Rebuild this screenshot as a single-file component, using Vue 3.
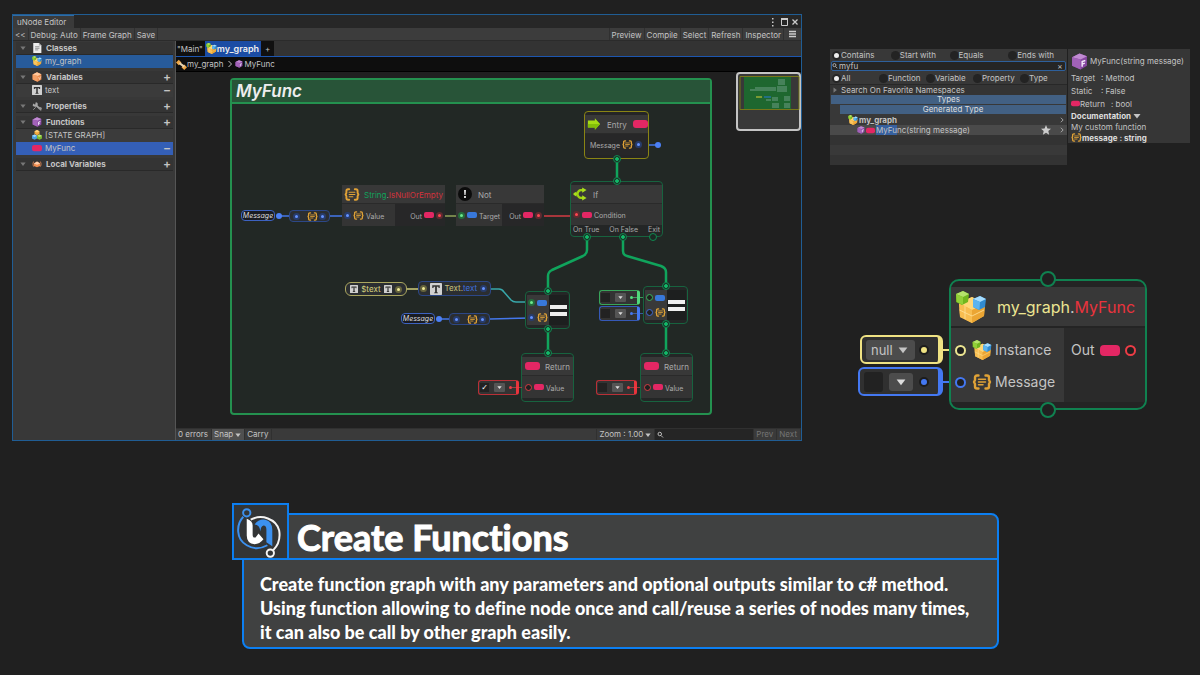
<script setup>
import { ref } from 'vue'

const view = { x: 176, y: 72 }
const at = (x, y, w, h) => ({
  left: x - view.x + 'px',
  top: y - view.y + 'px',
  width: w + 'px',
  height: h + 'px'
})

const groups = [
  { title: 'Classes', icon: 'doc', add: false, rows: [{ name: 'my_graph', icon: 'graph', active: 'a' }] },
  { title: 'Variables', icon: 'ocube', add: true, rows: [{ name: 'text', icon: 'tee', remove: true }] },
  { title: 'Properties', icon: 'wrench', add: true, rows: [] },
  {
    title: 'Functions', icon: 'pcube', add: true,
    rows: [
      { name: '[STATE GRAPH]', icon: 'state' },
      { name: 'MyFunc', icon: 'pill', active: 'b', remove: true }
    ]
  },
  { title: 'Local Variables', icon: 'local', add: true, rows: [] }
]

const query = ref('myfu')
const match = ref('Contains')
const kind = ref('All')
const matches = ['Contains', 'Start with', 'Equals', 'Ends with']
const kinds = ['All', 'Function', 'Variable', 'Property', 'Type']

const params = [
  { x: 241, y: 210, nx: 289 },
  { x: 401, y: 313, nx: 449 }
]
const compares = [
  { x: 525, y: 291, linked: true },
  { x: 643, y: 286, linked: false }
]
const returns = [{ x: 521 }, { x: 640 }]
const defaults = [
  { x: 478, y: 380, tone: 'red', on: true, label: 'First return value' },
  { x: 596, y: 380, tone: 'red', on: false, label: 'Second return value' },
  { x: 599, y: 290, tone: 'green', on: false, label: 'Left operand' },
  { x: 599, y: 306, tone: 'blue', on: false, label: 'Right operand' }
]
const flowPorts = [
  [617, 159], [617, 181], [587, 237], [623, 237], [548, 291], [548, 329],
  [548, 353], [666, 286], [666, 324], [666, 353]
]
</script>

<template>
  <main class="page">
    <svg class="defs" aria-hidden="true">
      <symbol id="graph" viewBox="0 0 32 32">
        <path d="M4 12 17 6l13 7-1 12-12 7-12-6z" fill="#f4b545" />
        <path d="M4 12 17 6l13 7-13 6z" fill="#ffd878" />
        <path d="M17 19v13L5 26 4 12z" fill="#f8bd50" />
        <path d="M17 19 30 13l-1 12-12 7z" fill="#eba533" />
        <path d="M10 15v13M4.500 19 17 25l12-6" fill="none" stroke="#ffe29a" stroke-width=".8" />
        <path d="M1 3 8 0l6 3-1 8-6 3-6-3z" fill="#71b61e" />
        <path d="M1 3 8 0l6 3-6 3z" fill="#b5e36b" /><path d="M8 6v8l-6-3-1-8z" fill="#92d038" />
        <path d="m18 8 7-3 6 3-1 8-6 3-6-3z" fill="#318bd0" />
        <path d="m18 8 7-3 6 3-6 3z" fill="#a5ddff" /><path d="M25 11l-.500 8-6.500-3V8z" fill="#5bb4ef" />
      </symbol>
      <symbol id="pcube" viewBox="0 0 16 16">
        <path d="M1 4 8 .5 15 3v9l-6 3.500L1 12z" fill="#8747a0" />
        <path d="M1 4 8 .5 15 3 9 6z" fill="#c18bd2" /><path d="M1 4l8 2v9.500L1 12z" fill="#a262b8" />
        <path d="M10.500 13V8l3-1M10.500 10.500l2.500-1" stroke="#f4e8fa" stroke-width="1.400" fill="none" />
      </symbol>
      <symbol id="ocube" viewBox="0 0 16 16">
        <path d="M1 4 8 .5l7 3V12l-6 3.500L1 12z" fill="#e88b4f" />
        <path d="M1 4 8 .5l7 3L9 6.500z" fill="#ffc79c" /><path d="M1 4l8 2.500v9L1 12z" fill="#f5a066" />
        <path d="m10.500 8 1.500 4 2-5" stroke="#ffe0c8" fill="none" />
      </symbol>
      <symbol id="local" viewBox="0 0 16 16">
        <path d="M3 4Q0 8 3 12M13 4q3 4 0 8" stroke="#a66b49" stroke-width="2" fill="none" />
        <path d="m3 7 5-3 5 3v4l-5 2-5-2z" fill="#f08c50" /><path d="m3 7 5-3 5 3-5 2z" fill="#ffd0ad" />
      </symbol>
      <symbol id="doc" viewBox="0 0 16 16">
        <path d="M2 0h9l4 4v12H2z" fill="#ececec" /><path d="M11 0v4h4z" fill="#aaa" />
        <path d="M5 6h7M5 8.500h7M5 11h5" stroke="#777" stroke-width="1.200" />
      </symbol>
      <symbol id="tee" viewBox="0 0 16 16">
        <rect width="16" height="16" rx="1" fill="#d0d0d0" />
        <path d="M3 3h10v3.500h-1.500L11 5H9.200v7l1.300 1v.800h-5V13l1.300-1V5H5l-.500 1.500H3z" fill="#333" />
      </symbol>
      <symbol id="wrench" viewBox="0 0 16 16">
        <path d="M2 4 5 6 6 2Q10 2 9 7l5 5-2 2-5-5Q3 10 1 7z" fill="#a8a8a8" />
        <path d="m2 14 4-4M11 10l4 1-1 4z" stroke="#999" stroke-width="1.500" fill="#999" />
      </symbol>
      <symbol id="state" viewBox="0 0 16 16">
        <path d="m8 0 4 2v4.500L8 8.500l-4-2V2z" fill="#f2a93d" /><path d="m8 0 4 2-4 2-4-2z" fill="#ffd47c" />
        <path d="m4 7 4 2v4.500l-4 2-4-2V9z" fill="#4a9fe0" /><path d="m4 7 4 2-4 2-4-2z" fill="#9ad6ff" />
        <path d="m12 7 4 2v4.500l-4 2-4-2V9z" fill="#79b930" /><path d="m12 7 4 2-4 2-4-2z" fill="#bce675" />
      </symbol>
      <symbol id="pill" viewBox="0 0 16 16"><rect y="3" width="16" height="10" rx="3.500" fill="#e32764" /></symbol>
      <symbol id="brackets" viewBox="0 0 20 16">
        <path d="M6.500 1.500H5Q3 1.500 3 3.500V6L2 8l1 2v2.500q0 2 2 2h1.500M13.500 1.500H15q2 0 2 2V6l1 2-1 2v2.500q0 2-2 2h-1.500" fill="none" stroke="#e0a236" stroke-width="2.400" stroke-linecap="round" stroke-linejoin="round" />
        <path d="M6.500 5.200h7M6.500 8h7M6.500 10.800h4.500" stroke="#e0a236" stroke-width="1.500" stroke-linecap="round" />
      </symbol>
      <symbol id="arrow" viewBox="0 0 16 16">
        <path d="M1 4h8V1.500L15 8l-6 6.500V12H1z" fill="#a5dc14" /><path d="M1 8h14l-6 6.500V12H1z" fill="#83bf08" />
      </symbol>
      <symbol id="branch" viewBox="0 0 16 16">
        <path d="M1 8h4Q6 3.500 9 3.500h2.500M5 8q1 4.500 4 4.500h2.500" fill="none" stroke="#9cd312" stroke-width="2.600" />
        <path d="m10.500.500 5 3-5 3zM10.500 9.500l5 3-5 3zM0 8l4-3v6z" fill="#a9df1c" />
      </symbol>
      <symbol id="bang" viewBox="0 0 16 16">
        <circle cx="8" cy="8" r="8" fill="#0b0b0b" /><path d="M7 3.500h2l-.400 5.500H7.400z" fill="#fff" /><circle cx="8" cy="11.500" r="1.200" fill="#fff" />
      </symbol>
      <symbol id="lens" viewBox="0 0 16 16">
        <circle cx="5.500" cy="6" r="3.500" fill="none" stroke="#bbb" stroke-width="2" /><path d="m8 9 4 4" stroke="#bbb" stroke-width="2" />
      </symbol>
      <symbol id="star" viewBox="0 0 16 16"><path d="m8 0 2.300 5.400 5.700.500-4.300 3.800L13 15.500 8 12.400l-5 3.100 1.300-5.800L0 5.900l5.700-.500z" fill="#ccc" /></symbol>
      <symbol id="down" viewBox="0 0 16 16"><path d="M1 4h14L8 13z" fill="currentColor" /></symbol>
      <symbol id="next" viewBox="0 0 16 16"><path d="m5 2 6 6-6 6" fill="none" stroke="currentColor" stroke-width="2" /></symbol>
    </svg>

    <div class="top">
      <section class="editor" aria-label="uNode Editor">
        <header class="titlebar">
          <span class="wtab">uNode Editor</span>
          <svg class="winbtns" viewBox="0 0 30 12" aria-hidden="true">
            <path d="M3 2h1.500v1.500H3zM3 5.500h1.500V7H3zM3 9h1.500v1.500H3z" fill="#ccc" />
            <path d="M12.500 2.500h6v7h-6z" fill="none" stroke="#ccc" /><path d="M12 2h7v2h-7z" fill="#ccc" />
            <path d="m23.500 3.500 5 5m0-5-5 5" stroke="#ccc" stroke-width="1.300" />
          </svg>
        </header>
        <nav class="toolbar">
          <button>&lt;&lt;</button><button>Debug: Auto</button><button>Frame Graph</button><button>Save</button>
          <span class="fill"></span>
          <button>Preview</button><button>Compile</button><button>Select</button><button>Refresh</button><button>Inspector</button>
          <button class="menu" aria-label="Menu"><svg class="i8" viewBox="0 0 8 8"><path d="M1 1.500h7M1 4h7M1 6.500h7" stroke="#ccc" stroke-width="1.500" /></svg></button>
        </nav>
        <div class="workspace">
          <aside class="sidebar">
            <section v-for="g in groups" :key="g.title">
              <h2 class="ghead">
                <svg class="tri"><use href="#down" /></svg>
                <svg class="i10"><use :href="'#' + g.icon" /></svg>
                <span>{{ g.title }}</span>
                <button v-if="g.add" class="sign" :aria-label="'Add to ' + g.title">+</button>
              </h2>
              <div v-for="r in g.rows" :key="r.name" class="grow" :class="r.active">
                <svg class="i10"><use :href="'#' + r.icon" /></svg>
                <span>{{ r.name }}</span>
                <button v-if="r.remove" class="sign" :aria-label="'Remove ' + r.name">−</button>
              </div>
            </section>
          </aside>
          <div class="graph">
            <div class="tabs">
              <button>"Main"</button>
              <button class="on"><svg class="i11"><use href="#graph" /></svg>my_graph</button>
              <button class="plus">+</button>
            </div>
            <div class="crumbs">
              <svg class="i11" viewBox="0 0 16 16" aria-hidden="true"><path d="m4 1 4 4-4 4-4-4zM12 8l4 4-4 4-4-4z" fill="#eda647" /><path d="m5 6 7 5" stroke="#e7d3b0" stroke-width="3" /></svg>
              <a href="#">my_graph</a><svg class="i8"><use href="#next" /></svg>
              <svg class="i8"><use href="#pcube" /></svg><a href="#">MyFunc</a>
            </div>
            <div class="canvas">
              <section class="frame" :style="at(230, 78, 482, 337)"><h1>MyFunc</h1></section>

              <svg class="wires" aria-hidden="true">
                <g transform="translate(-176 -72)" fill="none">
                  <g stroke="#10a45c" stroke-width="2.500" stroke-linejoin="round">
                    <path d="M617 159v22M587 237v13q0 4-4 6l-31 14q-4 2-4 6v15M623 237v14q0 4 4 5l34 10q5 2 5 6v14M548 329v24M666 324v29" />
                  </g>
                  <g stroke="#4477ea" stroke-width="1.500">
                    <path d="M640 145h18M279 216h16M329 216h18M439 319h16M490 319l40-1" />
                    <path d="M403 289h16" stroke="#d0cd7a" /><path d="M490 289h9q3 0 5 3l7 8q2 2 5 2h14" stroke="#38a7aa" />
                    <path d="M445 216h12" stroke="#91a258" /><path d="M544 216h26" stroke="#d43b43" />
                  </g>
                </g>
              </svg>

              <article class="node entry" :style="at(584, 111, 65, 48)">
                <header><svg class="i14"><use href="#arrow" /></svg><span>Entry</span><i class="pill lg"></i></header>
                <div class="prow end"><span>Message</span><svg class="br"><use href="#brackets" /></svg><i class="port blue"></i></div>
              </article>
              <article class="node plain" :style="at(342, 185, 103, 41)">
                <header class="snug"><svg class="i14w"><use href="#brackets" /></svg><span><b class="g">String</b>.<b class="r">IsNullOrEmpty</b></span></header>
                <div class="cells"><div class="prow"><i class="port blue"></i><svg class="br"><use href="#brackets" /></svg><span>Value</span></div>
                  <div class="prow dark end"><span>Out</span><i class="pill"></i><i class="port red"></i></div></div>
              </article>
              <article class="node plain" :style="at(456, 185, 88, 41)">
                <header><svg class="i14"><use href="#bang" /></svg><span>Not</span></header>
                <div class="cells"><div class="prow"><i class="port green"></i><i class="pill bl"></i><span>Target</span></div>
                  <div class="prow dark end"><span>Out</span><i class="pill"></i><i class="port red"></i></div></div>
              </article>
              <article class="node flow" :style="at(570, 181, 93, 56)">
                <header><svg class="i14"><use href="#branch" /></svg><span>If</span></header>
                <div class="prow tall"><i class="port red"></i><i class="pill"></i><span>Condition</span></div>
                <footer><span>On True</span><span>On False</span><span>Exit</span></footer>
              </article>

              <template v-for="p in params" :key="p.x">
                <div class="param" :style="at(p.x, p.y, 34, 11)">Message</div>
                <div class="chip blue" :style="at(p.nx, p.y, 41, 12)"><i class="port blue"></i><svg class="br"><use href="#brackets" /></svg><i class="port blue"></i></div>
              </template>
              <div class="chip gold" :style="at(345, 282, 62, 14)"><svg class="i8"><use href="#tee" /></svg><span>$text</span><svg class="i8"><use href="#tee" /></svg><i class="port yellow"></i></div>
              <div class="chip blue text" :style="at(418, 281, 73, 15)"><i class="port yellow"></i><svg class="i12"><use href="#tee" /></svg><span>Text.<b>text</b></span><i class="port blue"></i></div>

              <article v-for="c in compares" :key="c.x" class="node flow equals" :style="at(c.x, c.y, 45, 38)">
                <div class="ins">
                  <div><i class="port green" :class="{ open: !c.linked }"></i><i class="pill bl"></i></div>
                  <div><i class="port blue" :class="{ open: !c.linked }"></i><svg class="br"><use href="#brackets" /></svg></div>
                </div>
                <div class="bars"></div>
              </article>
              <article v-for="r in returns" :key="r.x" class="node flow ret" :style="at(r.x, 353, 53, 49)">
                <header><i class="pill lg"></i><span>Return</span></header>
                <div class="prow"><i class="port red open"></i><i class="pill"></i><span>Value</span></div>
              </article>
              <div v-for="d in defaults" :key="d.label" class="default" :class="d.tone" :style="at(d.x, d.y, 41, 15)">
                <input type="checkbox" :checked="d.on" :aria-label="d.label">
                <button class="dd" :aria-label="d.label + ' source'"><svg><use href="#down" /></svg></button><i class="dot"></i>
              </div>

              <svg class="wires" aria-hidden="true">
                <g transform="translate(-176 -72)" stroke="#0f8a50" fill="#1c2a24">
                  <circle cx="653" cy="237" r="3.500" />
                  <g v-for="p in flowPorts" :key="p.join()"><circle :cx="p[0]" :cy="p[1]" r="3.500" /><circle :cx="p[0]" :cy="p[1]" r="1.500" fill="#12b868" stroke="#12b868" /></g>
                  <g fill="#4c80f5" stroke="none"><circle cx="658" cy="145" r="3" /><circle cx="279" cy="216" r="3" /><circle cx="439" cy="319" r="3" /></g>
                </g>
              </svg>
              <svg class="minimap" viewBox="0 0 65 59" aria-label="Minimap">
                <rect x="1" y="1" width="63" height="57" rx="3" fill="#383838" stroke="#c4c4c4" stroke-width="2" />
                <rect x="8" y="5" width="47" height="32" fill="#1e672f" />
                <path d="M4 4.500h59v33H4z" fill="none" stroke="#777718" />
                <path d="M42 7h7v6h-7zM19 15h21v4H19zM14 17h5v2h-5zM41 14h10v6H41zM36 25h6v4h-6zM48 24h6v5h-6zM36 31h7v5h-7zM48 31h6v5h-6zM30 27h5v2h-5z" fill="#46825a" />
                <path d="M20 25h6" stroke="#7b9a33" stroke-width="2" /><path d="M28 25h7" stroke="#226f83" stroke-width="2" />
              </svg>
            </div>
            <footer class="status">
              <span>0 errors</span><button class="lit">Snap <svg class="i6"><use href="#down" /></svg></button><button>Carry</button>
              <span class="fill"></span>
              <button>Zoom : 1.00 <svg class="i6"><use href="#down" /></svg></button>
              <label class="find"><svg class="i8"><use href="#lens" /></svg><input type="text" aria-label="Find node"></label>
              <button disabled>Prev</button><button disabled>Next</button>
            </footer>
          </div>
        </div>
      </section>

      <aside class="right">
        <div class="lookup">
          <section class="search">
            <div class="radios four"><label v-for="m in matches" :key="m"><input v-model="match" type="radio" name="match" :value="m">{{ m }}</label></div>
            <label class="query"><svg class="i8"><use href="#lens" /></svg><input v-model="query" type="text" aria-label="Search"><button aria-label="Clear">×</button></label>
            <div class="radios five"><label v-for="k in kinds" :key="k"><input v-model="kind" type="radio" name="kind" :value="k">{{ k }}</label></div>
            <div class="fav"><svg class="tri side"><use href="#down" /></svg>Search On Favorite Namespaces</div>
            <div class="band">Types</div>
            <div class="band inner">Generated Type</div>
            <div class="result first"><svg class="i10"><use href="#graph" /></svg><strong>my_graph</strong><span class="fill"></span><svg class="i6"><use href="#next" /></svg></div>
            <div class="result second"><svg class="i8"><use href="#pcube" /></svg><svg class="i9"><use href="#pill" /></svg><span><mark>MyFu</mark>nc(string message)</span><span class="fill"></span><svg class="i10 star"><use href="#star" /></svg><svg class="i6"><use href="#next" /></svg></div>
            <div class="empty"></div><div class="empty alt"></div><div class="empty"></div>
          </section>
          <section class="info">
            <h3><svg class="i18"><use href="#pcube" /></svg>MyFunc(string message)</h3>
            <p><span>Target</span>: Method</p>
            <p><span>Static</span>: False</p>
            <p><svg class="i9"><use href="#pill" /></svg><span>Return</span>: bool</p>
            <p class="docs"><strong>Documentation</strong> <svg class="i8"><use href="#down" /></svg></p>
            <p class="tight">My custom function</p>
            <p class="docs"><svg class="br"><use href="#brackets" /></svg><strong>message : string</strong></p>
          </section>
        </div>

        <div class="call">
          <div class="inputs">
            <div class="bigdef yellow"><span class="sel"><select aria-label="Instance"><option>null</option></select><svg><use href="#down" /></svg></span><i class="dot"></i></div>
            <div class="bigdef blue"><input type="text" aria-label="Message"><button class="dd" aria-label="Message source"><svg><use href="#down" /></svg></button><i class="dot"></i></div>
          </div>
          <article class="bignode">
            <i class="ring top-port"></i>
            <header><svg><use href="#graph" /></svg><h2><b>my_graph</b>.<em>MyFunc</em></h2></header>
            <div class="bigbody">
              <div class="bigin">
                <div><i class="ring y"></i><svg><use href="#graph" /></svg>Instance</div>
                <div><i class="ring b"></i><svg><use href="#brackets" /></svg>Message</div>
              </div>
              <div class="bigout"><div>Out<i class="bigpill"></i><i class="ring r"></i></div></div>
            </div>
            <i class="ring bottom-port"></i>
          </article>
        </div>
      </aside>
    </div>

    <section class="callout">
      <header>
        <svg class="logo" viewBox="0 0 58 58" aria-label="uNode logo">
          <rect x="1" y="1" width="56" height="56" fill="#333536" stroke="#0c7ff2" stroke-width="2" />
          <path d="M11.500 14C4 22 4 37 15 43q10 6 21 0" fill="none" stroke="#3c91ef" stroke-width="2" />
          <circle cx="15" cy="10" r="3.700" fill="none" stroke="#3c91ef" stroke-width="2" />
          <path d="M19 17C30 11 45 16 48 28q2 12-6 20" fill="none" stroke="#f4f4f4" stroke-width="2" />
          <circle cx="39" cy="51" r="3.700" fill="none" stroke="#f4f4f4" stroke-width="2" />
          <path d="M15 16q6 2 6 7v9q0 4 3 3l3-4 5 6q-4 5-9 5-8-1-8-9z" fill="#fff" />
          <path d="M23 22q4-6 11-5 7 2 7 10v17l-6-4V27q0-4-3-4-3 1-3 6-1-7-6-7z" fill="#3c91ef" />
        </svg>
        <h2>Create Functions</h2>
      </header>
      <p>Create function graph with any parameters and optional outputs similar to c# method.<br>Using function allowing to define node once and call/reuse a series of nodes many times,<br>it can also be call by other graph easily.</p>
    </section>
  </main>
</template>

<style>
body { margin: 0; background: #202020; }
</style>

<style scoped>
* { box-sizing: border-box; }
.page { min-height: 100vh; padding: 14px 10px 26px 12px; background: #202020; color: #c4c4c4; font: 8px/12px Inter, "Liberation Sans", sans-serif; }
.defs { position: absolute; width: 0; height: 0; }
h1, h2, h3, p { margin: 0; font-size: inherit; }
svg { flex: none; display: block; }
i { display: block; flex: none; }
button, input, select { font: inherit; color: inherit; margin: 0; padding: 0; border: 0; background: none; border-radius: 0; outline: 0; appearance: none; }
a { color: inherit; text-decoration: none; }
.fill { flex: 1; }
.i6 { width: 6px; height: 6px; } .i8 { width: 8px; height: 8px; } .i9 { width: 9px; height: 9px; }
.i10 { width: 10px; height: 10px; } .i11 { width: 11px; height: 11px; } .i12 { width: 12px; height: 12px; }
.i14 { width: 14px; height: 14px; } .i14w { width: 16px; height: 13px; } .i18 { width: 17px; height: 17px; }
.br { width: 11px; height: 9px; }
.tri { width: 6px; height: 6px; color: #777; }
.top { display: grid; grid-template-columns: minmax(0, 790fr) minmax(0, 360fr); gap: 28px; align-items: start; }

.editor { border: 1px solid #205d94; background: #383838; }
.titlebar { display: flex; justify-content: space-between; align-items: end; height: 13px; background: #272727; }
.wtab { padding: 0 8px 0 4px; border-top: 1px solid #2e6ca6; background: #3a3a3a; }
.winbtns { width: 30px; height: 12px; margin-right: 2px; }
.toolbar { display: flex; height: 13px; background: #3c3c3c; border-bottom: 1px solid #2b2b2b; }
.toolbar button { display: flex; align-items: center; padding: 1px 2px 0; border-right: 1px solid #303030; }
.toolbar .fill + button { border-left: 1px solid #303030; }
.toolbar .menu { padding: 0 5px 0 4px; border: 0; }
.workspace { display: grid; grid-template-columns: 163px minmax(0, 1fr); }
.sidebar { display: flex; flex-direction: column; gap: 3px; padding: 1px 2px 0 3px; background: #383838; border-right: 1px solid #555; }
.ghead, .grow { display: flex; align-items: center; height: 13px; }
.ghead { gap: 4px; padding-left: 4px; background: #343434; font-weight: 700; border-bottom: 1px solid #292929; }
.ghead .i10 { margin-left: 2px; }
.grow { gap: 3px; padding: 0 0 2px 16px; background: #3b3b3b; }
.grow.a { background: #275b9b; } .grow.b { background: #345fb7; }
.sign { margin-left: auto; width: 12px; font-size: 12px; line-height: 12px; font-weight: 600; text-align: center; }

.graph { display: flex; flex-direction: column; min-width: 0; }
.tabs { display: flex; height: 16px; border-bottom: 1px solid #1d56b0; background: #333; }
.tabs button { display: flex; align-items: center; padding: 0 2px 0 1px; background: #101010; }
.tabs .on { background: #1b4ca4; color: #eee; font-weight: 600; font-size: 9px; }
.tabs .plus { padding: 0 4px; }
.crumbs { display: flex; align-items: center; gap: 1px; height: 15px; background: #0e0e0e; border-bottom: 1px solid #000; }
.crumbs a { padding-right: 2px; }
.crumbs .i11 { margin-right: -1px; }
.canvas { position: relative; flex: 1; min-height: 356px; overflow: hidden; background: #202020; font-size: 7px; line-height: 9px; color: #aaa; }
.wires { position: absolute; inset: 0; width: 100%; height: 100%; pointer-events: none; }
.frame { position: absolute; border: 2px solid #24914f; border-radius: 4px; background: #222825; }
.frame h1 { height: 24px; padding-left: 4px; background: #285438; border-bottom: 2px solid #24914f; color: #eee; font: italic 600 17px/22px Inter, sans-serif; }
.minimap { position: absolute; right: 0; top: 0; width: 65px; height: 59px; }

.node { position: absolute; display: flex; flex-direction: column; background: #242626; }
.node.entry, .node.flow { padding: 3px 0; border: 1px solid #17633f; border-radius: 4px; }
.node.entry { border-color: #8a8414; background: #252526; }
.node header { display: flex; align-items: center; gap: 6px; height: 19px; flex: none; padding: 0 2px; background: #383838; font-size: 8px; border-bottom: 1px solid #2a2a2a; }
.node header.snug { gap: 4px; }
.node header span, .prow span { padding-top: 2px; }
.node.entry header { padding-right: 1px; } .node.entry header span { flex: 1; }
.node b, .chip b { font-weight: 400; } .g { color: #10a45c; } .r { color: #d4323c; }
.cells { display: grid; grid-template-columns: 53fr 50fr; flex: 1; }
.prow { display: flex; align-items: center; gap: 2px; padding: 0 2px; flex: 1; background: #343434; }
.prow.dark, .entry .prow { background: #272728; }
.end { justify-content: flex-end; }
.entry .prow { padding-right: 6px; }
.flow > .prow { padding: 0 2px; }
.prow.tall { flex: none; height: 21px; }
.node footer { display: flex; justify-content: space-between; padding: 0 2px; height: 9px; }
.pill { width: 10px; height: 6px; border-radius: 2px; background: #e32764; }
.pill.bl { background: #3878da; }
.pill.lg { width: 15px; height: 8px; border-radius: 3px; }
.port { width: 7px; height: 7px; border-radius: 50%; border: 2px solid #283c6b; background: #6592ff; }
.port.red { border-color: #612a30; background: #ff4650; }
.port.green { border-color: #246d3c; background: #6be88c; }
.port.yellow { border-color: #66643d; background: #f0eb96; }
.port.open { border-width: 1px; border-color: #d43b43; background: #202020; }
.port.open.green { border-color: #3ab45c; } .port.open.blue { border-color: #3e6bd5; }
.param { position: absolute; border: 1px solid #3d62c0; border-radius: 4px; background: #191b22; color: #ddd; font-style: italic; font-size: 7px; text-align: center; }
.chip { position: absolute; display: flex; align-items: center; justify-content: space-between; padding: 0 3px; border: 1px solid #2c4787; border-radius: 4px; background: #2b2e31; }
.chip .br { margin-left: 5px; }
.chip.gold { padding: 0 4px; border-color: #aaa65f; border-radius: 6px; color: #d6d27e; font-size: 8px; }
.chip.text { padding: 0 3px 0 1px; color: #c5c17c; font-size: 8px; } .chip.text b { color: #3f6fdc; }
.node.equals { flex-direction: row; padding: 3px 1px; }
.ins { width: 22px; display: flex; flex-direction: column; background: #393939; }
.ins div { flex: 1; display: flex; align-items: center; gap: 2px; padding-left: 1px; }
.bars { flex: 1; background: linear-gradient(#eee, #eee) 50% 10px / 17px 4px no-repeat, linear-gradient(#eee, #eee) 50% 17px / 17px 4px no-repeat, #1d1f1f; }
.default { position: absolute; display: flex; align-items: center; justify-content: space-between; padding: 0 4px 0 1px; border: 1px solid #b93037; border-right: 3px solid #e8343c; border-radius: 3px; background: #333; --tone: #f03e46; }
.default.green { --tone: #50e17d; border-color: #38a55a; border-right-color: #50d87a; }
.default.blue { --tone: #4478f2; border-color: #3659b7; border-right-color: #4478f2; }
.default::after { content: ""; position: absolute; left: 33px; width: 10px; height: 1px; background: var(--tone); opacity: .6; }
.default input { width: 9px; height: 9px; background: #222; }
.default input:checked::after { content: "✓"; display: block; color: #fff; font: 700 8px/9px "DejaVu Sans", sans-serif; text-align: center; }
.dd { display: flex; align-items: center; justify-content: center; width: 11px; height: 9px; background: #555; color: #ddd; border-radius: 1px; }
.dd svg { width: 5px; height: 5px; }
.default .dot { width: 3px; height: 3px; border-radius: 50%; background: var(--tone); }
.ret header { gap: 5px; padding: 0 3px; } .ret .prow { gap: 2px; padding-left: 3px; }

.status { display: flex; height: 12px; background: #3a3a3a; border-top: 1px solid #303030; }
.status > * { display: flex; align-items: center; gap: 2px; padding: 0 3px 0 2px; line-height: 11px; border-right: 1px solid #303030; }
.status .fill { padding: 0; }
.status .lit { background: #505050; }
.status button:disabled { color: #747474; }
.status .find { width: 99px; background: #252525; padding: 0 2px; } .find input { width: 80px; }

.right { padding-top: 35px; }
.lookup { display: grid; grid-template-columns: 237fr 122fr; gap: 1px; align-items: start; }
.search { background: #383838; line-height: 10px; overflow: hidden; }
.radios { display: grid; height: 12px; align-items: center; padding-left: 2px; }
.four { grid-template-columns: repeat(4, 1fr); } .five { grid-template-columns: repeat(5, 1fr); }
.radios label { display: flex; align-items: center; }
.radios input { width: 9px; height: 9px; border-radius: 50%; background: #232323; }
.radios input:checked { background: #eee; border: 2px solid #262626; }
.query { display: flex; align-items: center; height: 10px; margin: 0 1px 1px; border: 1px solid #2e609c; border-radius: 2px; background: #252525; }
.query .i8 { width: 7px; }
.query input { flex: 1; min-width: 0; } .query button { width: 10px; line-height: 8px; }
.fav { display: flex; align-items: center; gap: 3px; height: 11px; padding-left: 2px; background: #343434; border-top: 1px solid #282828; }
.side { transform: rotate(-90deg); }
.band { height: 9px; margin: 0 1px 1px; background: #426083; text-align: center; line-height: 9px; color: #ddd; }
.band.inner { margin-left: 10px; }
.result { display: flex; align-items: center; height: 10px; gap: 1px; padding-right: 2px; }
.first { padding-left: 18px; } .second { padding-left: 27px; background: #4a4a4a; }
.star { margin-right: 7px; }
mark { background: #36609f; color: inherit; }
.empty { height: 10px; background: #333; } .empty.alt { background: #393939; }
.info { padding: 2px 3px 0; background: #363636; }
.info h3 { display: flex; align-items: center; gap: 2px; height: 20px; font-weight: 400; white-space: nowrap; }
.info p { display: flex; align-items: center; height: 13px; }
.info p span { width: 30px; } .info p svg + span { width: 31px; }
.info .docs, .info .tight { height: 11px; gap: 2px; white-space: nowrap; }
.info .docs .br { margin-right: -2px; }
.info strong { color: #ddd; }

.call { display: grid; grid-template-columns: 85px minmax(0, 198px); gap: 6px; align-items: start; margin-top: 114px; padding-left: 28px; font-size: 14px; line-height: 20px; }
.inputs { display: grid; gap: 3px; padding-top: 56px; }
.bigdef { --tone: #efe283; position: relative; display: flex; align-items: center; justify-content: space-between; height: 29px; padding: 0 9px 0 4px; border: 2px solid var(--tone); border-right-width: 5px; border-radius: 6px; background: #303030; }
.bigdef.yellow { margin-left: 2px; } .bigdef.blue { --tone: #4478f2; }
.bigdef::after { content: ""; position: absolute; right: -11px; width: 7px; height: 2px; background: var(--tone); }
.bigdef input { width: 19px; height: 20px; background: #222; border-radius: 3px; }
.bigdef .dd { width: 24px; height: 18px; border-radius: 3px; background: #4c4c4c; } .bigdef .dd svg { width: 10px; height: 10px; }
.bigdef .dot { width: 10px; height: 10px; border: 2px solid #1c1c1c; border-radius: 50%; background: var(--tone); }
.sel { position: relative; } .sel select { display: block; width: 49px; height: 20px; padding-left: 5px; background: #4c4c4c; border-radius: 3px; font-size: 13px; }
.sel svg { position: absolute; right: 7px; top: 5px; width: 10px; height: 10px; pointer-events: none; }
.bignode { position: relative; border: 2px solid #108150; border-radius: 10px; padding: 6px 0; background: #242424; }
.bignode header { display: flex; align-items: center; gap: 10px; height: 41px; padding: 0 4px; background: #383838; border-bottom: 2px solid #242424; }
.bignode header svg { width: 32px; height: 32px; }
.bignode h2 { font-size: 16px; font-weight: 400; } .bignode h2 b { font-weight: 400; color: #ece591; } .bignode h2 em { font-style: normal; color: #e9333d; }
.bigbody { display: grid; grid-template-columns: 113fr 81fr; }
.bigin, .bigout { padding: 6px 4px 4px; background: #383838; } .bigout { background: #2a2a2a; padding-left: 7px; }
.bigin div, .bigout div { display: flex; align-items: center; gap: 3px; height: 32px; }
.bigin svg { width: 20px; height: 20px; margin-left: 3px; }
.bigout div { gap: 5px; }
.ring { width: 11px; height: 11px; border: 2px solid #108150; border-radius: 50%; background: #202020; }
.ring.y { border-color: #ece591; } .ring.b { border-color: #4478f2; } .ring.r { border-color: #ed3d46; }
.bigpill { width: 20px; height: 11px; border-radius: 4px; background: #e32764; }
.top-port, .bottom-port { position: absolute; width: 16px; height: 16px; left: calc(50% - 8px); }
.top-port { top: -10px; } .bottom-port { bottom: -10px; }

.callout { margin: 62px 191px 0 220px; color: #fff; font-family: Lato, "Liberation Sans", sans-serif; font-weight: 900; font-variant-ligatures: none; }
.callout header { display: flex; align-items: flex-end; }
.logo { position: relative; z-index: 1; width: 57px; height: 57px; }
.callout h2 { flex: 1; height: 47px; margin-left: -2px; padding-left: 8px; border: 2px solid #0c7ff2; border-radius: 0 8px 0 0; background: #404141; font-size: 36px; line-height: 44px; -webkit-text-stroke: 1px #fff; }
.callout p { margin: -2px 0 0 10px; padding: 12px 0 3px 16px; border: 2px solid #0c7ff2; border-radius: 0 0 8px 8px; background: #404141; font-size: 18px; line-height: 24px; }
</style>
